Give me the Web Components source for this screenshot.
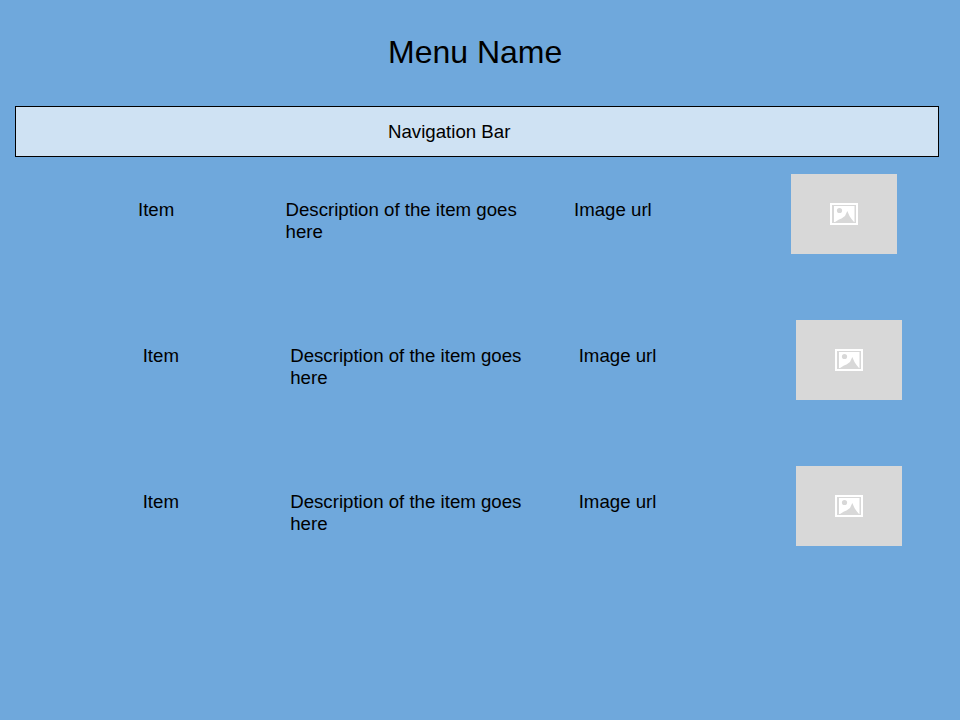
<!DOCTYPE html>
<html lang="en">
<head>
<meta charset="utf-8">
<title>Menu Name</title>
<style>
html, body { margin: 0; height: 100%; }
body { background: #6fa8dc; color: #000; font-family: "Liberation Sans", Arial, sans-serif; overflow: hidden; }
</style>
</head>
<body>
<menu-page>
  <span slot="title">Menu Name</span>
  <nav-bar slot="nav">Navigation Bar</nav-bar>
  <menu-row style="--indent:138px"></menu-row>
  <menu-row style="--indent:142.7px"></menu-row>
  <menu-row style="--indent:142.7px"></menu-row>
</menu-page>
<script>
class MenuPage extends HTMLElement {
  constructor() {
    super();
    this.attachShadow({ mode: 'open' }).innerHTML = `
      <style>
        :host { display: flex; flex-direction: column; width: 960px; height: 720px; }
        h1 { margin: 0; padding: 32px 0 0 388px; height: 74px; font-size: 32px; line-height: 40px; font-weight: 400; white-space: nowrap; }
        main { display: flex; flex-direction: column; gap: 66px; padding-top: 17px; }
      </style>
      <h1><slot name="title"></slot></h1>
      <slot name="nav"></slot>
      <main><slot></slot></main>`;
  }
}
class NavBar extends HTMLElement {
  constructor() {
    super();
    this.attachShadow({ mode: 'open' }).innerHTML = `
      <style>
        :host { display: flex; align-items: center; box-sizing: border-box; width: 924px; height: 51px; margin-left: 15px;
          padding-left: 372px; border: 1px solid #000; background: #cfe2f3; font-size: 18.67px; line-height: 22px; }
      </style>
      <slot></slot>`;
  }
}
class ImagePlaceholder extends HTMLElement {
  constructor() {
    super();
    this.attachShadow({ mode: 'open' }).innerHTML = `
      <style>
        :host { display: flex; align-items: center; justify-content: center; width: 106px; height: 80px; background: #d8d8d8; }
        svg { display: block; }
      </style>
      <svg width="28" height="22" viewBox="0 0 28 22">
        <path fill="#fff" fill-rule="evenodd" d="M0 0H28V22H0ZM2 2V20H26V2Z"/>
        <path fill="#fff" d="M4 3H24.5V19H4Z"/>
        <path fill="#d8d8d8" d="M5 19L9 16.5L11.5 15.5L15 13L17.3 8L19.5 13L21.5 16L24 19Z"/>
        <circle cx="9.5" cy="7.5" r="2.6" fill="#d8d8d8"/>
      </svg>`;
  }
}
class MenuRow extends HTMLElement {
  constructor() {
    super();
    this.attachShadow({ mode: 'open' }).innerHTML = `
      <style>
        :host { display: grid; grid-template-columns: 147.5px 288.5px 217px 106px; height: 80px; margin-left: var(--indent);
          font-size: 18.67px; line-height: 22px; }
        p { margin: 0; padding-top: 25px; }
        .description { width: 240px; }
      </style>
      <p>Item</p>
      <p class="description">Description of the item goes here</p>
      <p>Image url</p>
      <image-placeholder></image-placeholder>`;
  }
}
customElements.define('image-placeholder', ImagePlaceholder);
customElements.define('nav-bar', NavBar);
customElements.define('menu-row', MenuRow);
customElements.define('menu-page', MenuPage);
</script>
</body>
</html>
